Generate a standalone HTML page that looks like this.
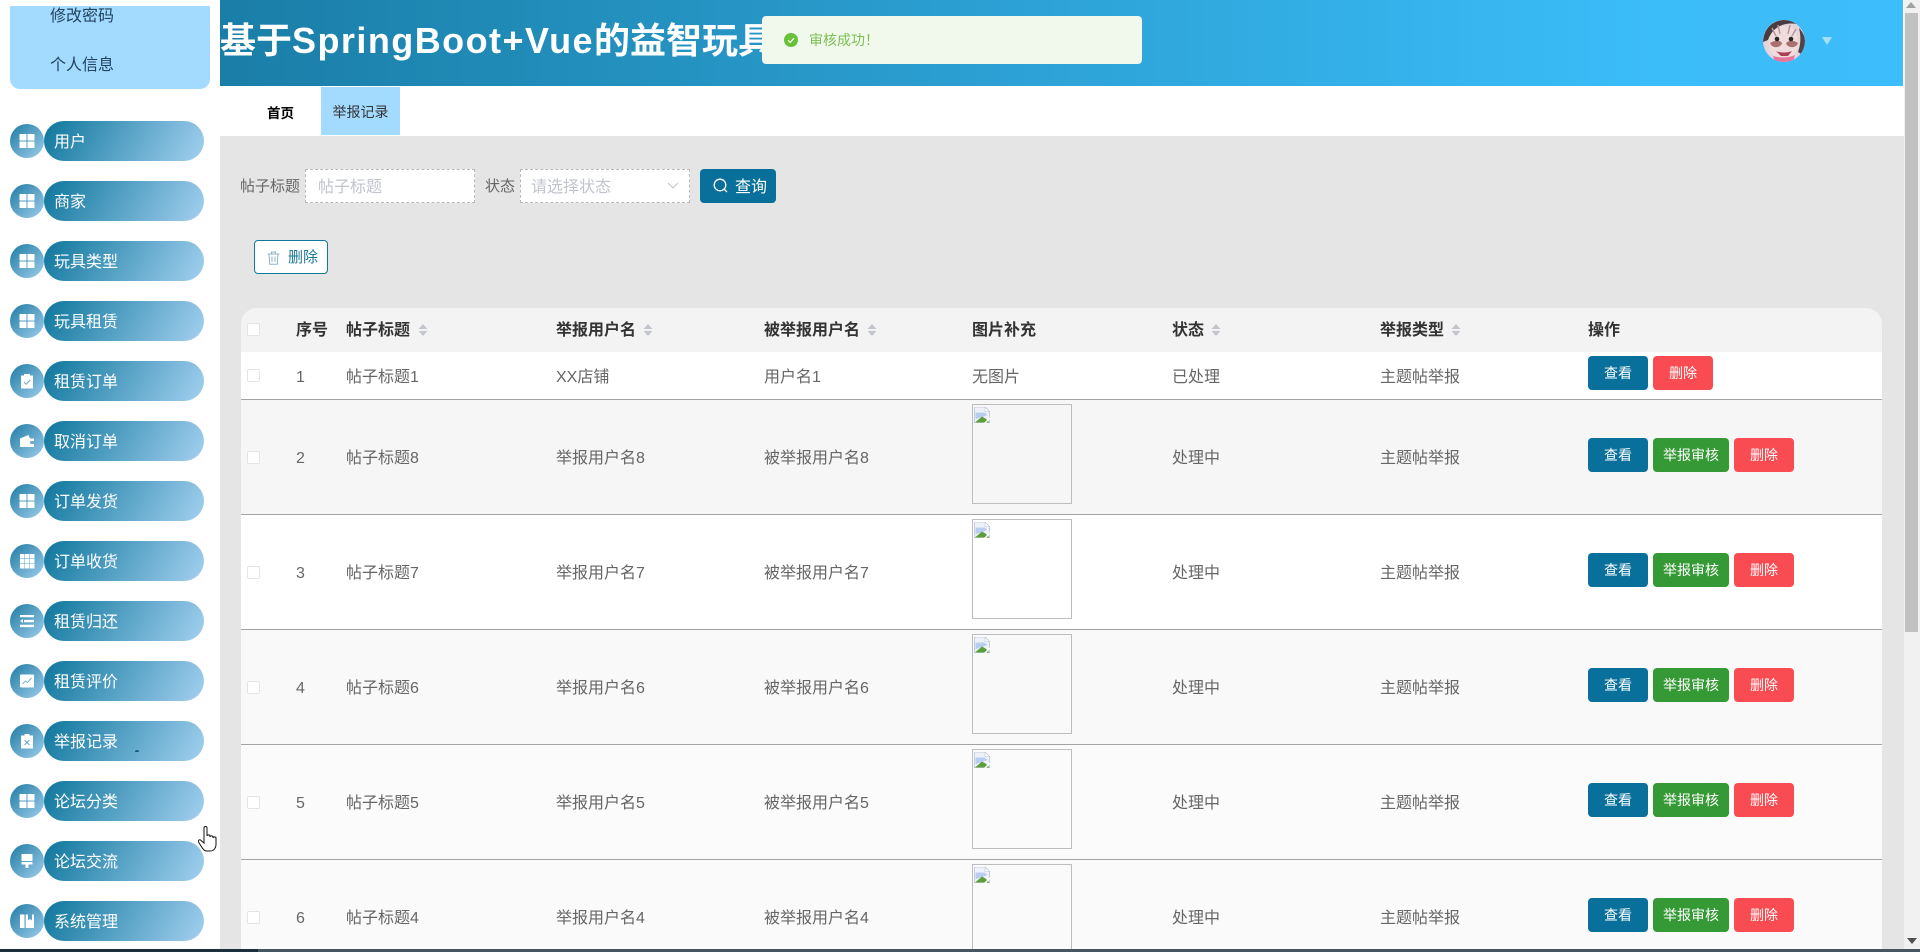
<!DOCTYPE html>
<html lang="zh-CN"><head><meta charset="utf-8"><title>举报记录</title>
<style>
*{box-sizing:border-box}
html,body{margin:0;padding:0;width:1920px;height:952px;overflow:hidden;background:#fff}
body{position:relative;font-family:"Liberation Sans","Noto Sans CJK SC",sans-serif;font-size:16px;color:#666}
.a{position:absolute}
.panel{left:10px;top:6px;width:200px;height:83px;background:#a3daff;border-radius:0 0 10px 10px}
.pt{left:50px;font-size:16px;line-height:24px;color:#21435f}
.c{position:absolute;left:10px;width:34px;height:34px;border-radius:50%;background:linear-gradient(135deg,#1f7ba2,#9dcdec)}
.c svg{position:absolute;left:9px;top:9px;width:16px;height:16px;fill:#fff}
.p{position:absolute;left:44px;width:160px;height:40px;border-radius:20px;background:linear-gradient(120deg,#0e769c 0%,#a3d0f0 100%);color:#fff;font-size:16px;line-height:43px;padding-left:10px}
.hd{left:220px;top:0;width:1683px;height:86px;background:linear-gradient(90deg,#1a7ea7 0%,#3bbdf9 85%,#3dbdfb 100%)}
.ti{left:220px;top:13px;line-height:56px;font-size:36px;font-weight:700;color:#fff;white-space:nowrap}
.ti span{letter-spacing:1.45px}
.toast{left:762px;top:16px;width:380px;height:48px;background:#f0f9eb;border-radius:4px}
.tab{left:220px;top:86px;width:1684px;height:50px;background:#fff}
.main{left:220px;top:136px;width:1685px;height:816px;background:#e5e5e6}
.lb{font-size:15px;line-height:24px;top:175px;color:#666}
.in{top:169px;height:34px;width:170px;background:#fff;border:1px dashed #b9b9b9;font-size:16px;line-height:35px;color:#c0c4cc;padding-left:12px}
.th{position:absolute;top:308px;left:241px;width:1641px;height:44px;background:#f3f3f4;border-radius:16px 16px 0 0;overflow:hidden}
.hc{position:absolute;top:11px;line-height:24px;font-size:16px;font-weight:700;color:#333;white-space:nowrap}
.so{position:absolute;top:16px;width:10px;height:12px}
.r{position:absolute;left:241px;width:1641px;border-bottom:1px solid #a3a3a3}
.r .x{position:absolute;line-height:24px;white-space:nowrap;color:#666}
.cb{position:absolute;left:6px;width:13px;height:13px;background:#fff;border:1px solid #e4e4e6;border-radius:2px}
.b{position:absolute;height:34px;border-radius:4px;color:#fff;font-size:14px;line-height:35px;text-align:center}
.v{left:1347px;width:60px;background:#08709b}
.u{left:1412px;width:76px;background:#359a35}
.d1{left:1412px;width:60px;background:#f94b52}
.d2{left:1493px;width:60px;background:#f94b52}
.im{position:absolute;left:731px;width:100px;height:100px;border:1px solid #bdbdbd}
.im svg{position:absolute;left:1px;top:2px;width:16px;height:16px}
.sb{left:1904px;top:0;width:16px;height:949px;background:#f1f1f1}
.th2{left:1905px;top:13px;width:13px;height:619px;background:#c1c1c1}
</style></head><body>
<svg width="0" height="0" style="position:absolute"><defs>
<symbol id="g" viewBox="0 0 16 16"><rect x=".5" y="1" width="7" height="6.500" rx=".5"/><rect x="8.500" y="1" width="7" height="6.500" rx=".5"/><rect x=".5" y="8.500" width="7" height="6.500" rx=".5"/><rect x="8.500" y="8.500" width="7" height="6.500" rx=".5"/></symbol>
<symbol id="br" viewBox="0 0 16 16"><path d="M.5 0H11l4.500 4.500V16H.5z" fill="#eef2f8" stroke="#b9c4d4" stroke-width=".8"/><path d="M11 0v4.500h4.500z" fill="#fff" stroke="#b9c4d4" stroke-width=".6"/><path d="M1.500 5.500h9l3 2.500-10 3.500-2 1z" fill="#b9cdf0"/><path d="M1 15.500l7-6 3.500 2 4 4z" fill="#5c9e3c"/><path d="M10.500 16.500l5.500-5.500" stroke="#fff" stroke-width="1.400"/></symbol>
<symbol id="so" viewBox="0 0 10 12"><path d="M5 0l4.500 5H.5zM5 12L.5 7h9z" fill="#c3c6cc"/></symbol>
</defs></svg>

<div class="a panel"></div>
<div class="a pt" style="top:5px">修改密码</div>
<div class="a pt" style="top:54px">个人信息</div>

<div class="c" style="top:124px"><svg><use href="#g"/></svg></div><div class="p" style="top:121px">用户</div>
<div class="c" style="top:184px"><svg><use href="#g"/></svg></div><div class="p" style="top:181px">商家</div>
<div class="c" style="top:244px"><svg><use href="#g"/></svg></div><div class="p" style="top:241px">玩具类型</div>
<div class="c" style="top:304px"><svg><use href="#g"/></svg></div><div class="p" style="top:301px">玩具租赁</div>
<div class="c" style="top:364px"><svg viewBox="0 0 16 16"><path d="M2 2.500h3V1h6v1.500h3V15.500H2z"/><path d="M5 9l2.200 2.300L11.200 7" fill="none" stroke="#6fa9c8" stroke-width="1"/></svg></div><div class="p" style="top:361px">租赁订单</div>
<div class="c" style="top:424px"><svg viewBox="0 0 16 16"><path d="M1 5.500 9.500 2l1.500 3.500h4V14H1z"/><rect x="11" y="8" width="5" height="3" rx="1.200" fill="#6fa9c8"/></svg></div><div class="p" style="top:421px">取消订单</div>
<div class="c" style="top:484px"><svg><use href="#g"/></svg></div><div class="p" style="top:481px">订单发货</div>
<div class="c" style="top:544px"><svg viewBox="0 0 16 16"><path d="M1 1h4.500v4.500H1zM6 1h4.500v4.500H6zM11 1h4.500v4.500H11zM1 6h4.500v4.500H1zM6 6h4.500v4.500H6zM11 6h4.500v4.500H11zM1 11h4.500v4.500H1zM6 11h4.500v4.500H6zM11 11h4.500v4.500H11z"/></svg></div><div class="p" style="top:541px">订单收货</div>
<div class="c" style="top:604px"><svg viewBox="0 0 16 16"><path d="M1 2h14v2.300H1zM5 6.900h10v2.300H5zM1 11.800h14v2.300H1zM1 8l3-2v4z"/></svg></div><div class="p" style="top:601px">租赁归还</div>
<div class="c" style="top:664px"><svg viewBox="0 0 16 16"><rect x="1" y="1.500" width="14" height="13" rx="1"/><path d="M3.500 11l3-3 2 1.500L12.500 5" fill="none" stroke="#7fb0cf" stroke-width="1"/></svg></div><div class="p" style="top:661px">租赁评价</div>
<div class="c" style="top:724px"><svg viewBox="0 0 16 16"><path d="M2 2.500h3.500V1h5v1.500H14V15.500H2z"/><path d="M5.500 7l5 5M10.500 7l-5 5" stroke="#6fa9c8" stroke-width="1"/></svg></div><div class="p" style="top:721px">举报记录</div>
<div class="c" style="top:784px"><svg><use href="#g"/></svg></div><div class="p" style="top:781px">论坛分类</div>
<div class="c" style="top:844px"><svg viewBox="0 0 16 16"><path d="M2.500 1h11v7h-11zM2.500 9h11v2.500H9.500V15h-3v-3.500h-4z"/></svg></div><div class="p" style="top:841px">论坛交流</div>
<div class="c" style="top:904px"><svg viewBox="0 0 16 16"><path d="M1 1.500h4.500V15H1zM6.700 1.500H15V15H6.700zM9 1.500v6l2-1.500 2 1.500v-6z" fill-rule="evenodd"/></svg></div><div class="p" style="top:901px">系统管理</div>
<div class="a" style="left:135px;top:750px;width:4px;height:2px;background:#1d5a80;border-radius:2px 2px 0 0"></div>

<div class="a hd"></div>
<div class="a ti">基于<span>SpringBoot+Vue</span>的益智玩具</div>
<div class="a toast">
<svg class="a" style="left:22px;top:17px" width="14" height="14" viewBox="0 0 14 14"><circle cx="7" cy="7" r="7" fill="#67c23a"/><path d="M4 7.200l2.200 2.200L10 5.200" fill="none" stroke="#fff" stroke-width="1.200"/></svg>
<div class="a" style="left:47px;top:12px;font-size:14px;line-height:24px;color:#7cbf52;white-space:nowrap">审核成功！</div>
</div>
<svg class="a" style="left:1763px;top:20px" width="42" height="42" viewBox="0 0 42 42">
<defs><clipPath id="ac"><circle cx="21" cy="21" r="21"/></clipPath></defs>
<g clip-path="url(#ac)"><rect width="42" height="42" fill="#e6d4d8"/>
<path d="M0 22C1 6 12 0 22 0c6 0 10 2 12 4C22 2 10 6 5 20z" fill="#4a3b40"/>
<path d="M36 8c4 4 6 9 6 13 0 6-2 10-4 13l-3-2c3-8 3-16 1-24z" fill="#4f4347"/>
<path d="M6 26C5 12 14 6 22 6s14 6 13 18c-1 10-6 14-14 14S7 34 6 26z" fill="#efdcdd"/>
<path d="M9 8l4 8M15 5l2 9M27 5l-2 9M33 9l-4 7" stroke="#b9979d" stroke-width="1.500"/>
<path d="M7 23c5-3 10-3 12 0-1 5-10 6-12 0zM23 23c3-3 8-3 12 0-2 6-11 5-12 0z" fill="#a9706f"/>
<circle cx="14" cy="19" r="2.300" fill="#2b2326"/><circle cx="28" cy="19" r="2.300" fill="#2b2326"/>
<path d="M13 31c4 2 12 2 16 0l-4 5h-7z" fill="#a83f55"/>
<path d="M10 36c6 2 16 2 22-1l-2 7H12z" fill="#e6779b"/></g></svg>
<svg class="a" style="left:1822px;top:37px" width="10" height="8" viewBox="0 0 10 8"><path d="M0 0h10L5 8z" fill="#a8defa"/></svg>

<div class="a tab"></div>
<div class="a" style="left:267px;top:102px;font-size:13.500px;line-height:24px;font-weight:700;color:#000">首页</div>
<div class="a" style="left:321px;top:87px;width:79px;height:48px;background:#a3daff;font-size:14px;line-height:51px;text-align:center;color:#333">举报记录</div>

<div class="a main"></div>
<div class="a lb" style="left:240px">帖子标题</div>
<div class="a in" style="left:305px">帖子标题</div>
<div class="a lb" style="left:485px">状态</div>
<div class="a in" style="left:520px;padding-left:10px">请选择状态</div>
<svg class="a" style="left:667px;top:182px" width="12" height="8" viewBox="0 0 12 8"><path d="M1 1l5 5 5-5" fill="none" stroke="#c0c4cc" stroke-width="1.100"/></svg>
<div class="a" style="left:700px;top:169px;width:76px;height:34px;background:#08709b;border-radius:4px"></div>
<svg class="a" style="left:713px;top:178px" width="15" height="15" viewBox="0 0 15 15"><circle cx="7" cy="7" r="5.800" fill="none" stroke="#fff" stroke-width="1.300"/><path d="M11 11l3 3" stroke="#fff" stroke-width="1.300"/></svg>
<div class="a" style="left:735px;top:176px;font-size:16px;line-height:24px;color:#fff">查询</div>
<div class="a" style="left:254px;top:240px;width:74px;height:34px;background:#fff;border:1px solid #0f7a9f;border-radius:4px"></div>
<svg class="a" style="left:267px;top:251px" width="13" height="14" viewBox="0 0 13 14"><path d="M.5 3h12M4.500 3V1h4v2M2 3l.7 10.300h7.600L11 3M5 5.500v5.500M8 5.500v5.500" fill="none" stroke="#8fb4c4" stroke-width="1"/></svg>
<div class="a" style="left:288px;top:246px;font-size:15px;line-height:24px;color:#1a7899">删除</div>

<div class="th">
<div class="cb" style="top:15px"></div>
<div class="hc" style="left:55px">序号</div>
<div class="hc" style="left:105px">帖子标题</div><svg class="so" style="left:177px"><use href="#so"/></svg>
<div class="hc" style="left:315px">举报用户名</div><svg class="so" style="left:402px"><use href="#so"/></svg>
<div class="hc" style="left:523px">被举报用户名</div><svg class="so" style="left:626px"><use href="#so"/></svg>
<div class="hc" style="left:731px">图片补充</div>
<div class="hc" style="left:931px">状态</div><svg class="so" style="left:970px"><use href="#so"/></svg>
<div class="hc" style="left:1139px">举报类型</div><svg class="so" style="left:1210px"><use href="#so"/></svg>
<div class="hc" style="left:1347px">操作</div>
</div>

<div class="r" style="top:352px;height:48px;background:#fff">
<div class="cb" style="top:17px"></div>
<div class="x" style="left:55px;top:14px">1</div><div class="x" style="left:105px;top:14px">帖子标题1</div><div class="x" style="left:315px;top:14px">XX店铺</div><div class="x" style="left:523px;top:14px">用户名1</div><div class="x" style="left:731px;top:14px">无图片</div><div class="x" style="left:931px;top:14px">已处理</div><div class="x" style="left:1139px;top:14px">主题帖举报</div>
<div class="b v" style="top:4px">查看</div><div class="b d1" style="top:4px">删除</div>
</div>

<div class="r" style="top:400px;height:115px;background:#f6f6f7">
<div class="cb" style="top:51px"></div>
<div class="x" style="left:55px;top:47px">2</div><div class="x" style="left:105px;top:47px">帖子标题8</div><div class="x" style="left:315px;top:47px">举报用户名8</div><div class="x" style="left:523px;top:47px">被举报用户名8</div>
<div class="im" style="top:4px"><svg><use href="#br"/></svg></div>
<div class="x" style="left:931px;top:47px">处理中</div><div class="x" style="left:1139px;top:47px">主题帖举报</div>
<div class="b v" style="top:38px">查看</div><div class="b u" style="top:38px">举报审核</div><div class="b d2" style="top:38px">删除</div>
</div>

<div class="r" style="top:515px;height:115px;background:#fff">
<div class="cb" style="top:51px"></div>
<div class="x" style="left:55px;top:47px">3</div><div class="x" style="left:105px;top:47px">帖子标题7</div><div class="x" style="left:315px;top:47px">举报用户名7</div><div class="x" style="left:523px;top:47px">被举报用户名7</div>
<div class="im" style="top:4px"><svg><use href="#br"/></svg></div>
<div class="x" style="left:931px;top:47px">处理中</div><div class="x" style="left:1139px;top:47px">主题帖举报</div>
<div class="b v" style="top:38px">查看</div><div class="b u" style="top:38px">举报审核</div><div class="b d2" style="top:38px">删除</div>
</div>

<div class="r" style="top:630px;height:115px;background:#f9f9fa">
<div class="cb" style="top:51px"></div>
<div class="x" style="left:55px;top:47px">4</div><div class="x" style="left:105px;top:47px">帖子标题6</div><div class="x" style="left:315px;top:47px">举报用户名6</div><div class="x" style="left:523px;top:47px">被举报用户名6</div>
<div class="im" style="top:4px"><svg><use href="#br"/></svg></div>
<div class="x" style="left:931px;top:47px">处理中</div><div class="x" style="left:1139px;top:47px">主题帖举报</div>
<div class="b v" style="top:38px">查看</div><div class="b u" style="top:38px">举报审核</div><div class="b d2" style="top:38px">删除</div>
</div>

<div class="r" style="top:745px;height:115px;background:#fbfbfb">
<div class="cb" style="top:51px"></div>
<div class="x" style="left:55px;top:47px">5</div><div class="x" style="left:105px;top:47px">帖子标题5</div><div class="x" style="left:315px;top:47px">举报用户名5</div><div class="x" style="left:523px;top:47px">被举报用户名5</div>
<div class="im" style="top:4px"><svg><use href="#br"/></svg></div>
<div class="x" style="left:931px;top:47px">处理中</div><div class="x" style="left:1139px;top:47px">主题帖举报</div>
<div class="b v" style="top:38px">查看</div><div class="b u" style="top:38px">举报审核</div><div class="b d2" style="top:38px">删除</div>
</div>

<div class="r" style="top:860px;height:115px;background:#fafafa">
<div class="cb" style="top:51px"></div>
<div class="x" style="left:55px;top:47px">6</div><div class="x" style="left:105px;top:47px">帖子标题4</div><div class="x" style="left:315px;top:47px">举报用户名4</div><div class="x" style="left:523px;top:47px">被举报用户名4</div>
<div class="im" style="top:4px"><svg><use href="#br"/></svg></div>
<div class="x" style="left:931px;top:47px">处理中</div><div class="x" style="left:1139px;top:47px">主题帖举报</div>
<div class="b v" style="top:38px">查看</div><div class="b u" style="top:38px">举报审核</div><div class="b d2" style="top:38px">删除</div>
</div>

<div class="a sb"></div>
<div class="a th2"></div>
<svg class="a" style="left:1906px;top:2px" width="10" height="6" viewBox="0 0 10 6"><path d="M5 0l5 6H0z" fill="#a0a0a0"/></svg>
<svg class="a" style="left:1907px;top:938px" width="10" height="6" viewBox="0 0 10 6"><path d="M5 6L0 0h10z" fill="#505050"/></svg>

<svg class="a" style="left:198px;top:826px" width="19" height="26" viewBox="0 0 19 26"><path d="M6 2c0-2 3-2 3 0v8c0-1.500 3-1.500 3 0v1c0-1.500 3-1.500 3 0v1c0-1.500 3-1.500 3 0v6c0 4-2 7-6 7H9c-3 0-4-2-6-5l-2.500-4c-.8-2 1.500-3 2.500-1.500L6 17z" fill="#fff" stroke="#111" stroke-width="1"/></svg>

<div class="a" style="left:0;top:949px;width:1920px;height:3px;background:#47565d"></div>
<div class="a" style="left:0;top:949px;width:258px;height:3px;background:#1c2f3d"></div>
</body></html>
